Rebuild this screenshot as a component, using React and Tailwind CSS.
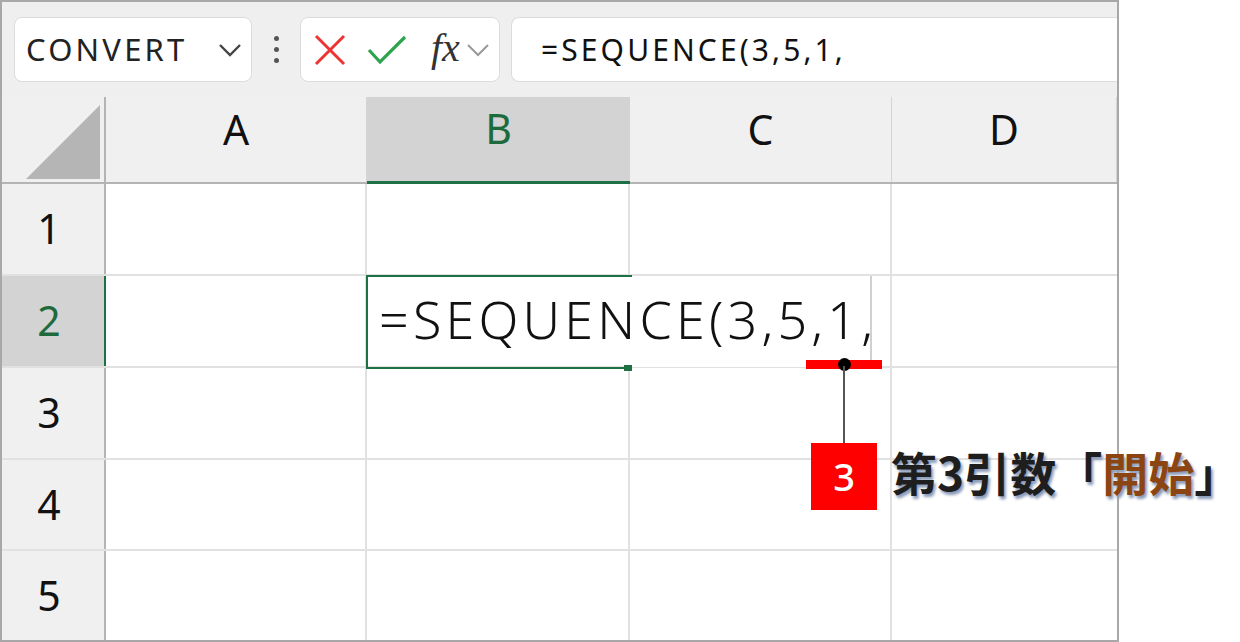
const cols = [
  { key: 'A', w: 'w-[261px]' },
  { key: 'B', w: 'w-[263px]' },
  { key: 'C', w: 'w-[262px]' },
  { key: 'D', w: 'flex-1' },
];

const rows = [
  { n: 1, h: 'h-[92px]' },
  { n: 2, h: 'h-[92px]' },
  { n: 3, h: 'h-[92px]' },
  { n: 4, h: 'h-[91px]' },
  { n: 5, h: 'flex-1' },
];

const Toolbar = () => (
  <div className="flex items-center h-[95px] bg-[#efefef] pl-[12px]">
    <div className="flex items-center justify-between w-[238px] h-[65px] bg-white border border-[#dcdcdc] rounded-[8px] pl-[11px] pr-[8px]">
      <span className="text-[31px] text-[#222] tracking-[3.2px]" style={{ fontFamily: '"Noto Sans", sans-serif' }}>CONVERT</span>
      <svg width="26" height="16" viewBox="0 0 26 16" fill="none" stroke="#444" strokeWidth="2.4">
        <path d="M3 3 L13 13 L23 3" />
      </svg>
    </div>
    <div className="flex flex-col gap-[6px] ml-[22px] mr-[21px]">
      <span className="w-[5px] h-[5px] rounded-full bg-[#555]" />
      <span className="w-[5px] h-[5px] rounded-full bg-[#555]" />
      <span className="w-[5px] h-[5px] rounded-full bg-[#555]" />
    </div>
    <div className="flex items-center w-[200px] h-[65px] bg-white border border-[#dcdcdc] rounded-[8px] pl-[12px]">
      <svg width="34" height="34" viewBox="0 0 34 34" stroke="#ee3333" strokeWidth="3" fill="none">
        <path d="M3 3 L31 31 M31 3 L3 31" />
      </svg>
      <svg className="ml-[20px]" width="40" height="32" viewBox="0 0 40 32" stroke="#2ea44f" strokeWidth="3.2" fill="none">
        <path d="M2 16 L13 28 L38 3" />
      </svg>
      <span className="ml-[24px] text-[40px] italic leading-none text-[#333] -mt-[4px]" style={{ fontFamily: '"Liberation Serif", serif' }}>
        fx
      </span>
      <svg className="ml-[6px]" width="24" height="14" viewBox="0 0 24 14" stroke="#999" strokeWidth="2" fill="none">
        <path d="M2 2 L12 12 L22 2" />
      </svg>
    </div>
    <div className="flex items-center flex-1 ml-[11px] h-[65px] bg-white border border-[#dcdcdc] border-r-0 rounded-l-[8px] pl-[29px]">
      <span className="text-[30px] text-[#111] tracking-[3.1px]" style={{ fontFamily: '"Noto Sans", sans-serif' }}>=SEQUENCE(3,5,1,</span>
    </div>
  </div>
);

const HeaderRow = () => (
  <div className="flex h-[87px] bg-[#f0f0f0] border-b-2 border-[#b4b4b4]">
    <div className="w-[104px] border-r-2 border-[#b4b4b4] flex items-start justify-end pt-[6px] pr-[2px]">
      <svg width="78" height="78" viewBox="0 0 78 78">
        <polygon points="76,2 76,76 2,76" fill="#b5b5b5" />
      </svg>
    </div>
    {cols.map((c) =>
      c.key === 'B' ? (
        <div
          key={c.key}
          className={`${c.w} flex items-center justify-center pb-[20px] bg-[#d3d3d3] text-[#1d6b3c] border-b-[3px] border-[#1e7145] -mb-[2px] text-[41px]`}
        >
          {c.key}
        </div>
      ) : (
        <div key={c.key} className={`${c.w} flex items-center justify-center pb-[20px] border-r border-[#d5d5d5] text-[41px] text-[#111]`}>
          {c.key}
        </div>
      )
    )}
  </div>
);

const Row = ({ n, h }) => {
  const active = n === 2;
  return (
    <div className={`flex ${h} border-b-2 border-[#e1e1e1] last:border-b-0`}>
      <div
        className={`w-[104px] flex items-center justify-center pr-[8px] text-[41px] border-r-2 ${
          active ? 'bg-[#d3d3d3] text-[#1d6b3c] border-[#1e7145]' : 'bg-[#f0f0f0] text-[#111] border-[#b4b4b4]'
        }`}
      >
        {n}
      </div>
      {cols.map((c) => (
        <div
          key={c.key}
          className={`${c.w} ${c.key === 'D' ? '' : 'border-r-2'} ${
            active && c.key === 'B' ? 'border-transparent' : 'border-[#e1e1e1]'
          }`}
        />
      ))}
    </div>
  );
};

export default function App() {
  return (
    <div
      className="w-[1240px] h-[642px] bg-white relative overflow-hidden"
      style={{ fontFamily: '"Noto Sans", "Noto Sans CJK JP", sans-serif' }}
    >
      <div className="w-[1119px] h-[642px] border-2 border-[#a8a8a8] flex flex-col overflow-hidden">
        <Toolbar />
        <HeaderRow />
        <div className="flex flex-col flex-1">
          {rows.map((r) => (
            <Row key={r.n} {...r} />
          ))}
        </div>
      </div>

      {/* editing cell B2 overlay */}
      <div className="absolute left-[366px] top-[275px] w-[266px] h-[94px] border-2 border-[#1e7145] border-r-0" />
      <div className="absolute left-[632px] top-[276px] w-[240px] h-[91px] bg-white border-r-2 border-[#d0d0d0]" />
      <div className="absolute left-[366px] top-[275px] w-[266px] h-[2px] bg-[#1e7145]" />
      <div className="absolute left-[624px] top-[365px] w-[8px] h-[6px] bg-[#1e7145]" />
      <div className="absolute left-[379px] top-[284px] text-[52px] font-light leading-[70px] tracking-[4.2px] text-[#111] whitespace-nowrap">
        =SEQUENCE(3,5,1,
      </div>

      {/* callout */}
      <div className="absolute left-[806px] top-[360px] w-[76px] h-[9px] bg-[#ff0000]" />
      <div className="absolute left-[838px] top-[358px] w-[13px] h-[13px] rounded-full bg-black" />
      <div className="absolute left-[843px] top-[366px] w-[2px] h-[78px] bg-[#555]" />
      <div className="absolute left-[811px] top-[443px] w-[66px] h-[67px] bg-[#ff0000] flex items-center justify-center text-white text-[38px] font-medium">
        3
      </div>
      <div
        className="absolute left-[891px] top-[439px] text-[46px] font-bold leading-[64px] text-[#1e1e1e] whitespace-nowrap [text-shadow:2px_3px_3px_#8899b8]"
        style={{ fontFamily: '"Noto Sans CJK JP", sans-serif' }}
      >
        第3引数「<span className="text-[#8b4513]">開始</span>」
      </div>
    </div>
  );
}
